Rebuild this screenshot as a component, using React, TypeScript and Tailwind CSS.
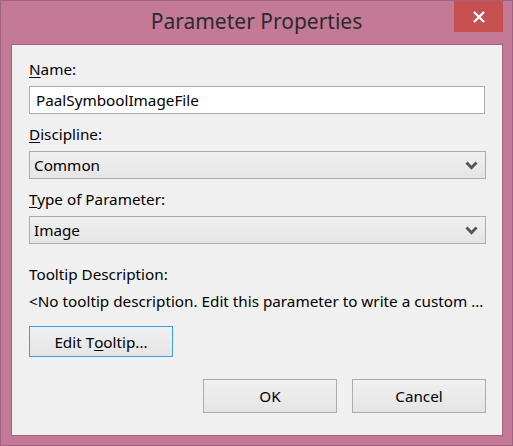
import React from "react";

const font = { fontFamily: '"Noto Sans", "Open Sans", sans-serif' };

function Chevron() {
  return (
    <svg width="13" height="9" viewBox="0 0 13 9" className="shrink-0">
      <polyline
        points="1.5,1.5 6.5,6.8 11.5,1.5"
        fill="none"
        stroke="#555555"
        strokeWidth="2.8"
      />
    </svg>
  );
}

function Combo({ value }: { value: string }) {
  return (
    <div className="flex h-[28px] w-[457px] items-center justify-between border border-[#acacac] bg-gradient-to-b from-[#f0f0f0] to-[#e5e5e5] pl-[4px] pr-[7px] text-[#000]">
      <span>{value}</span>
      <Chevron />
    </div>
  );
}

function Button({
  children,
  width,
  focused,
}: {
  children: React.ReactNode;
  width: string;
  focused?: boolean;
}) {
  return (
    <button
      className={
        "flex items-center justify-center border bg-gradient-to-b from-[#f0f0f0] to-[#e5e5e5] text-[#000] " +
        width +
        (focused ? " border-[#3c9cf0]" : " border-[#acacac]")
      }
    >
      {children}
    </button>
  );
}

export default function App() {
  return (
    <div
      className="flex h-[446px] w-[513px] flex-col border border-[#9d6482] bg-[#c47a96] text-[15.25px] leading-[20px]"
      style={font}
    >
      {/* Title bar */}
      <div className="relative flex h-[43px] items-start justify-center">
        <span className="mt-[5px] text-[21px] leading-[30px] text-[#2b2b2b]">
          Parameter Properties
        </span>
        <div className="absolute right-[9px] top-0 flex h-[31px] w-[49px] items-center justify-center bg-[#c75050]">
          <svg width="14" height="14" viewBox="0 0 14 14">
            <path d="M2 2 L12 12 M12 2 L2 12" stroke="#fff" strokeWidth="2.4" />
          </svg>
        </div>
      </div>

      {/* Client area */}
      <div className="mb-[9px] ml-[10px] mr-[9px] flex flex-1 flex-col border border-[#a3647e] bg-[#f0f0f0] pl-[17px] pt-[14px] pr-[16px] text-[#000]">
        <label>
          <span className="underline underline-offset-2">N</span>ame:
        </label>
        <div className="mt-[7px] flex h-[28px] w-[456px] items-center border border-[#abadb3] bg-white pl-[6px]">
          PaalSymboolImageFile
        </div>

        <label className="mt-[10px]">
          <span className="underline underline-offset-2">D</span>iscipline:
        </label>
        <div className="mt-[7px]">
          <Combo value="Common" />
        </div>

        <label className="mt-[10px]">
          <span className="underline underline-offset-2">T</span>ype of
          Parameter:
        </label>
        <div className="mt-[7px]">
          <Combo value="Image" />
        </div>

        <div className="mt-[20px]">Tooltip Description:</div>
        <div className="mt-[7px] whitespace-nowrap">
          &lt;No tooltip description. Edit this parameter to write a custom ...
        </div>

        <div className="mt-[15px] flex">
          <Button width="w-[144px] h-[31px]" focused>
            Edit T<span className="underline underline-offset-2">o</span>oltip...
          </Button>
        </div>

        <div className="mt-[22px] flex justify-end gap-[15px]">
          <Button width="w-[134px] h-[34px]">OK</Button>
          <Button width="w-[134px] h-[34px]">Cancel</Button>
        </div>
      </div>
    </div>
  );
}
